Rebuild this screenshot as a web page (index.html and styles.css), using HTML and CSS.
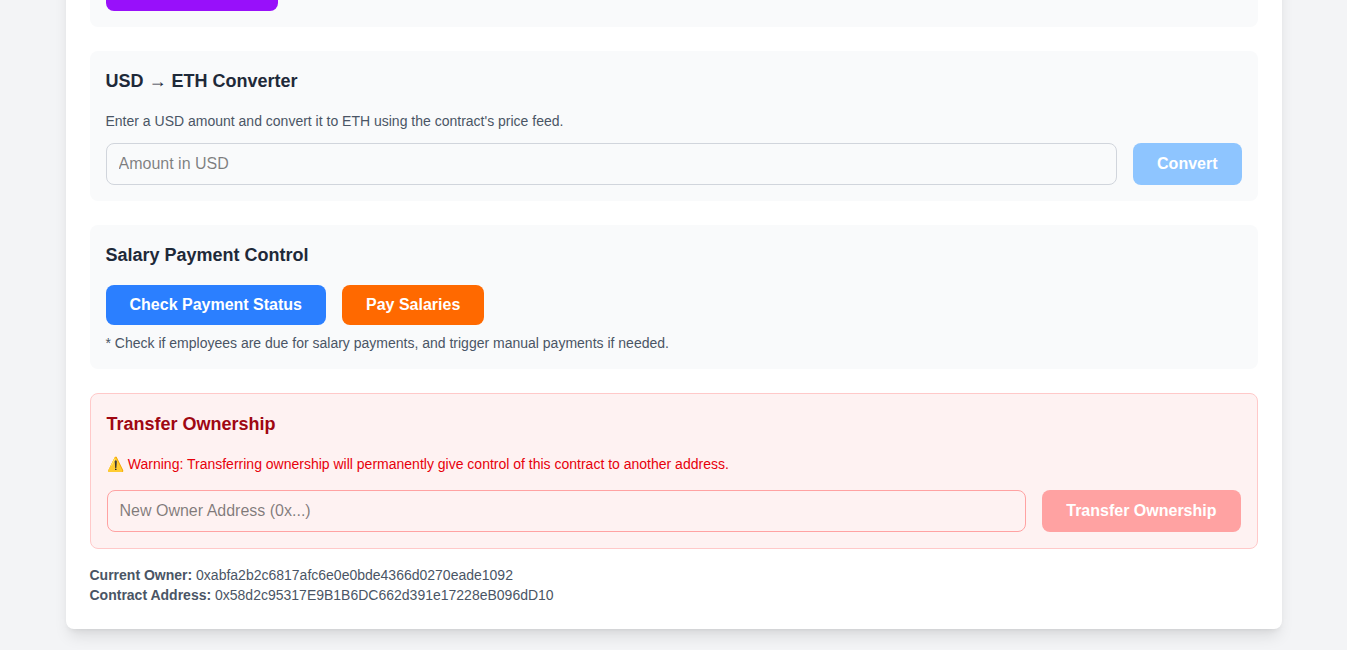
FILE: index.html
```html
<!DOCTYPE html>
<html lang="en">
<head>
<meta charset="utf-8">
<title>Contract Owner Dashboard</title>
<link rel="stylesheet" href="styles.css">
</head>
<body>
<main class="card">
  <section class="panel panel-clipped">
    <div class="button button-purple"></div>
  </section>

  <section class="panel">
    <h2 class="title">USD → ETH Converter</h2>
    <p class="text text-above">Enter a USD amount and convert it to ETH using the contract's price feed.</p>
    <div class="row">
      <input class="field" type="text" placeholder="Amount in USD">
      <button class="button button-blue-muted">Convert</button>
    </div>
  </section>

  <section class="panel">
    <h2 class="title">Salary Payment Control</h2>
    <div class="row">
      <button class="button button-blue">Check Payment Status</button>
      <button class="button button-orange">Pay Salaries</button>
    </div>
    <p class="text text-below">* Check if employees are due for salary payments, and trigger manual payments if needed.</p>
  </section>

  <section class="panel panel-danger">
    <h2 class="title title-danger">Transfer Ownership</h2>
    <p class="text text-danger"><span class="warning-sign">⚠️</span> Warning: Transferring ownership will permanently give control of this contract to another address.</p>
    <div class="row">
      <input class="field field-danger" type="text" placeholder="New Owner Address (0x...)">
      <button class="button button-red-muted">Transfer Ownership</button>
    </div>
  </section>

  <footer class="details">
    <p><strong>Current Owner:</strong> 0xabfa2b2c6817afc6e0e0bde4366d0270eade1092</p>
    <p><strong>Contract Address:</strong> 0x58d2c95317E9B1B6DC662d391e17228eB096dD10</p>
  </footer>
</main>
</body>
</html>
```
FILE: styles.css
```css
*,
*::before,
*::after {
  box-sizing: border-box;
  margin: 0;
  padding: 0;
}

body {
  height: 650px;
  overflow: hidden;
  background: #f3f4f6;
  color: #000;
  font-family: "Liberation Sans", Arial, "Noto Color Emoji", sans-serif;
  font-size: 16px;
  line-height: 24px;
}

.card {
  width: 1216px;
  margin: -100px auto 0;
  padding: 24px;
  background: #fff;
  border-radius: 8px;
  box-shadow: 0 10px 15px -3px rgb(0 0 0 / 0.1), 0 4px 6px -4px rgb(0 0 0 / 0.1);
}

.panel {
  margin-bottom: 24px;
  padding: 16px;
  background: #f9fafb;
  border-radius: 8px;
}

.panel-clipped {
  display: flex;
  align-items: flex-end;
  height: 103px;
}

.panel-danger {
  margin-bottom: 16px;
  background: #fef2f2;
  border: 1px solid #ffc9c9;
}

.title {
  margin-bottom: 16px;
  color: #1e2939;
  font-size: 18px;
  font-weight: 600;
  line-height: 28px;
}

.title-danger {
  color: #9f0712;
}

.text {
  color: #4a5565;
  font-size: 14px;
  line-height: 20px;
}

.text-above {
  margin-bottom: 12px;
}

.text-below {
  margin-top: 8px;
}

.text-danger {
  margin-bottom: 16px;
  color: #e7000b;
}

.warning-sign {
  margin: 0 -0.5px 0 0.5px;
}

.row {
  display: flex;
  gap: 16px;
}

.field {
  flex: 1;
  min-width: 0;
  height: 42px;
  padding: 8px 12px;
  background: transparent;
  border: 1px solid #d1d5dc;
  border-radius: 8px;
  color: inherit;
  font: inherit;
}

.field::placeholder {
  color: rgb(0 0 0 / 0.5);
}

.field-danger {
  border-color: #ffa2a2;
}

.button {
  padding: 8px 24px;
  border: 0;
  border-radius: 8px;
  color: #fff;
  font: inherit;
  font-weight: 600;
}

.button-purple {
  width: 172px;
  height: 40px;
  background: #9810fa;
}

.button-blue {
  background: #2b7fff;
}

.button-blue-muted {
  background: #8ec5ff;
}

.button-orange {
  background: #ff6900;
}

.button-red-muted {
  background: #ffa2a2;
}

.details {
  color: #4a5565;
  font-size: 14px;
  line-height: 20px;
}
```
